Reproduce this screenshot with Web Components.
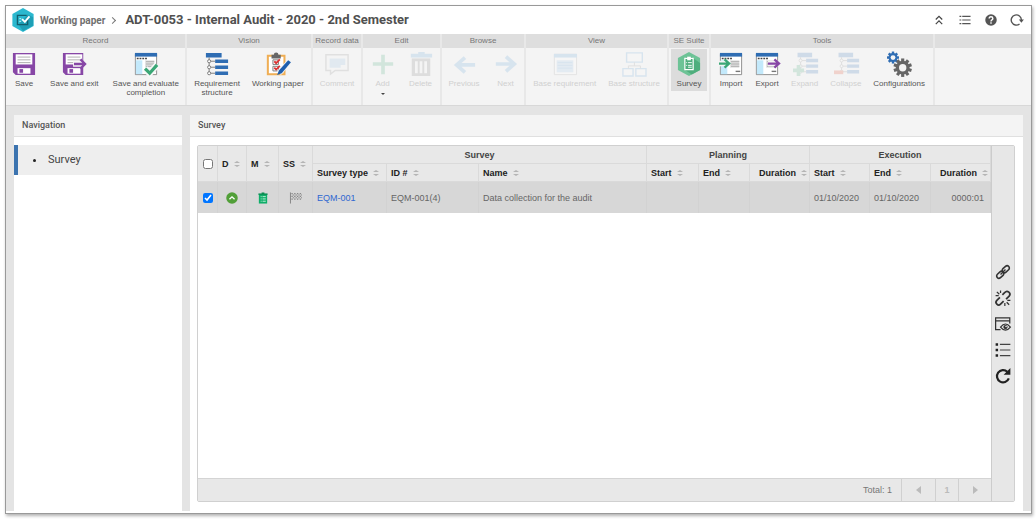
<!DOCTYPE html>
<html lang="en">
<head>
<meta charset="utf-8">
<title>ADT-0053 - Internal Audit - 2020 - 2nd Semester</title>
<style>
html,body{margin:0}
body{display:flex;min-height:100vh;box-sizing:border-box;padding:5px 4px 5px 5px;background:#fff;font:8px/9px "Liberation Sans",Arial,sans-serif;color:#555}
audit-app{flex:1}
</style>
</head>
<body>
<audit-app></audit-app>
<script>
const tree = `<path fill="#2f6db3" d="M1 1h17v5H1zM11 8h14v4H11zM11 14.500h14v4H11zM11 21h14v4H11z"/><path fill="none" stroke="#777" d="M4.500 6v17M6 10h5M6 16.500h5M6 23h5"/><g fill="#fff" stroke="#777"><circle cx="4.500" cy="10" r="1.700"/><circle cx="4.500" cy="16.500" r="1.700"/><circle cx="4.500" cy="23" r="1.700"/></g>`;
const form = `<path fill="#fff" stroke="#888" d="M1.500 2.500h23v22h-23z"/><path fill="#2f6db3" d="M1 1h24v4H1z"/><path stroke="#444" stroke-width="1.500" stroke-dasharray="2 1" d="M3 7h12"/><path fill="#c3e9fb" d="M2 9h7v15H2z"/><path fill="#e0e0e0" d="M12 9h10v8H12z"/><path stroke="#aaa" d="M13 10.500h9M13 13h9M13 15.500h9"/><path stroke="#777" stroke-width="1.500" d="M18 21h5"/>`;
const gear = (cx, cy, r, w, n, color) => {
  let teeth = '';
  for (let i = 0; i < n; i++) teeth += `<rect x="${cx - w / 2}" y="${cy - r}" width="${w}" height="${r}" transform="rotate(${i * 360 / n} ${cx} ${cy})"/>`;
  return `<g fill="${color}">${teeth}<circle cx="${cx}" cy="${cy}" r="${r * .75}"/></g><circle cx="${cx}" cy="${cy}" r="${r * .4}" fill="#f4f4f4"/>`;
};
const floppy = `<path fill="#8747a6" d="M1 1h24v24H4l-3-3z"/><path fill="#fff" d="M4 2.500h18v11H4z"/><path stroke="#aaa" d="M6 5.500h14M6 8.500h14M6 11.500h14"/><path fill="#fff" d="M6 17.500h14v6H6z"/><path fill="#8747a6" d="M8 18.500h4v4H8z"/>`;
const ICONS = {
  save: floppy,
  exit: floppy + `<path fill="none" stroke="#f4f4f4" stroke-width="6" d="M12 13h14"/><path fill="#f4f4f4" d="M23 1h3v24h-3z"/><path fill="none" stroke="#8747a6" stroke-width="2.500" d="M13 13h12M20 8l5 5-5 5"/>`,
  evaluate: form + `<path fill="none" stroke="#f8f8f8" stroke-width="7" d="M12 18l5 5 8-9"/><path fill="none" stroke="#3ba776" stroke-width="3.500" d="M12 18l5 5 8-9"/>`,
  tree,
  paper: `<path fill="#fff" stroke="#efae55" stroke-width="2.200" d="M2 4h18v20H2z"/><path fill="#666" d="M6 3h2.500a2.500 2.500 0 0 1 5 0H16v4H6z"/><path fill="#fff" stroke="#777" d="M7.500 8.500h6v5h-6zM7.500 15.500h6v5h-6z"/><path fill="none" stroke="#d33" stroke-width="2" d="M9 10l2 2 4-4M9 17l2 2 4-4"/><path stroke="#f4f4f4" stroke-width="6" d="M14 23L25 11"/><path fill="#1f5fae" d="M24 9l3 2-10 12-5 2 2-5z"/>`,
  comment: `<path fill="#f8f8f8" stroke="#888" stroke-width="1.500" d="M1 3h24v17H11l-5 4v-4H1z"/><path fill="#8dbce3" d="M5 7h17v7h-5v3H5z"/>`,
  plus: `<path fill="#3ba776" d="M11 3h4v8h9v4h-9v9h-4v-9H2v-4h9z"/>`,
  trash: `<path fill="#5b9fd8" d="M10 0h7v2h8v4H2V2h8z"/><path fill="#777" d="M3 7h20v19H3z"/><path stroke="#f4f4f4" stroke-width="3" d="M8 10v13M13 10v13M18 10v13"/>`,
  prev: `<path fill="none" stroke="#5b9fd8" stroke-width="4" d="M25 14H4M14 6l-9 8 9 8"/>`,
  next: `<path fill="none" stroke="#5b9fd8" stroke-width="4" d="M2 13h21M13 5l9 8-9 8"/>`,
  requirement: `<path fill="#fff" stroke="#999" d="M1.500 2.500h24v22h-24z"/><path fill="#5b9fd8" d="M1 2h25v4H1z"/><path fill="#9cc4ea" d="M4 9h18v13H4z"/><path stroke="#5b9fd8" d="M5 11.500h16M5 14.500h16M5 17.500h16"/>`,
  structure: `<g fill="#fafafa" stroke="#5b9fd8" stroke-width="1.500"><path d="M5 1h17v10H5zM1 18h11v8H1zM15 18h11v8H15z"/></g><path fill="none" stroke="#888" d="M13.500 11v4M7 18v-3h13v3"/>`,
  survey: `<path fill="#6dc396" d="M13 0l12 6.500v13L13 26 1 19.500v-13z"/><path fill="#4fae7d" d="M9 7l2-2h4l10 7v7.500l-9 5L8 19z"/><path fill="none" stroke="#fff" stroke-width="1.300" d="M8.500 7h9v12h-9z"/><path fill="#fff" d="M11 5h4v4h-4z"/><path stroke="#fff" d="M10 11.500h1M12 11.500h4M10 14.500h1M12 14.500h4M12 16.500h4"/>`,
  import: form + `<path fill="none" stroke="#f4f4f4" stroke-width="6" d="M0 12.500h11"/><path fill="none" stroke="#3ba776" stroke-width="2.500" d="M0 12.500h10M6 8l5 4.500L6 17"/>`,
  export: form + `<path fill="none" stroke="#f4f4f4" stroke-width="6" d="M14 12.500h12"/><path fill="none" stroke="#8747a6" stroke-width="2.500" d="M14 12.500h12M21 8l5 4.500-5 4.500"/>`,
  expand: `<svg x="4" y="0" width="24" height="24" viewBox="0 0 28 28">${tree}</svg><path fill="#3ba776" d="M4 14h4v4h4v4H8v4H4v-4H0v-4h4z"/>`,
  collapse: `<svg x="4" y="0" width="24" height="24" viewBox="0 0 28 28">${tree}</svg><path fill="#e2401c" d="M0 20h10v4H0z"/>`,
  gears: gear(6.5, 6, 6.5, 2.6, 8, '#2f6db3') + gear(17, 17, 10, 3.4, 10, '#666'),
  logo: `<path fill="#2bb8cf" d="M13 0l11.500 6.500v13L13 26 1.500 19.500v-13z"/><path fill="#1e9fb6" d="M8 18l10-11 6 3v9l-11 6z"/><path fill="none" stroke="#12606f" stroke-width="1.500" d="M17 8H7v10h11v-5"/><path fill="none" stroke="#fff" stroke-width="2" d="M12 12l3 3 5-6"/><path stroke="#c9f1f6" d="M9 11.500h2M9 14.500h2"/>`,
  up: `<path fill="none" stroke="#444" stroke-width="2.600" d="M6 12l7-7 7 7M6 22l7-7 7 7"/>`,
  list: `<path stroke="#555" stroke-width="2.500" d="M1 5h4M7 5h18M1 13h4M7 13h18M1 21h4M7 21h18"/>`,
  help: `<circle cx="13" cy="13" r="12.500" fill="#555"/><path fill="none" stroke="#fff" stroke-width="3" d="M9 10q0-4 4-4t4 3.500q0 2-2 3.200t-2 3.300"/><path fill="#fff" d="M11.500 18h3v3h-3z"/>`,
  reload: `<path fill="none" stroke="#555" stroke-width="3" d="M18.500 21.500A11 11 0 1 1 22.500 13"/><path fill="#555" d="M17 12h11l-5.500 7z"/>`,
  link: `<g fill="none" stroke="#333" stroke-width="2.600"><rect x="-6.500" y="-3.700" width="13" height="7.400" rx="3.700" transform="translate(17.500 8.500) rotate(-42)"/><rect x="-6.500" y="-3.700" width="13" height="7.400" rx="3.700" transform="translate(8.500 17.500) rotate(-42)"/></g><path stroke="#333" stroke-width="2.200" d="M9 17l8-8"/>`,
  unlink: `<g fill="none" stroke="#333" stroke-width="2.800"><path d="M12 8l4-4a4 4 0 0 1 7 6l-5 5M14 18l-5 5a4 4 0 0 1-6-6l5-5"/></g><path stroke="#333" stroke-width="2" d="M3 3l4 4M9 1v4M1 9h5M19 20l4 4M16 21v5M20 17h5"/>`,
  preview: `<path fill="none" stroke="#333" stroke-width="2" d="M9 22H1V3h23v9M1 8h23"/><path fill="#e7e7e7" stroke="#333" stroke-width="2" d="M9 18q8-10 16 0-8 10-16 0z"/><circle cx="17" cy="18" r="3.500" fill="#333"/><circle cx="18" cy="17" r="1.200" fill="#fff"/>`,
  sidelist: `<path stroke="#222" stroke-width="4" d="M1 4h4M1 13h4M1 22h4"/><path stroke="#444" stroke-width="2" d="M8 4h17M8 13h17M8 22h17"/>`,
  redo: `<path fill="none" stroke="#222" stroke-width="3.600" d="M22.500 17A10 10 0 1 1 20 6"/><path fill="#222" d="M25 0v11H14z"/>`,
  ok: `<circle cx="13" cy="13" r="12.500" fill="#519f38"/><path fill="none" stroke="#fff" stroke-width="3" d="M7.500 15.500L13 10.500l5.500 5"/>`,
  clip: `<path fill="#0fae69" d="M4 4h18v21H4z"/><path fill="#0a8a50" d="M3 3h7V1h6v2h7v3H3z"/><path stroke="#c9f3de" stroke-width="2" d="M8 10h2M12 10h7M8 15h2M12 15h7M8 20h2M12 20h7"/>`,
  flag: `<path stroke="#777" stroke-width="1.800" d="M1 1v24"/><path fill="none" stroke="#888" stroke-width="2.600" stroke-dasharray="3 3" d="M3 3.500h22M6 6.500h20M3 9.500h22M6 12.500h20M3 15.500h22"/>`
};

function define(name, markup, setup) {
  const template = document.createElement('template');
  template.innerHTML = markup;
  customElements.define(name, class extends HTMLElement {
    constructor() {
      super();
      this.attachShadow({mode: 'open'}).append(template.content.cloneNode(true));
    }
    connectedCallback() { if (setup) setup(this, this.shadowRoot); }
  });
}

define('ui-icon', `<style>:host{display:inline-flex;width:var(--icon,24px);height:var(--icon,24px)}svg{width:100%;height:100%;overflow:visible}</style><svg viewBox="0 0 26 26" aria-hidden="true"></svg>`,
  (el, root) => { root.querySelector('svg').innerHTML = ICONS[el.getAttribute('name')]; });

define('tool-button', `<style>
:host{display:block;flex:none}
button{display:flex;flex-direction:column;align-items:center;gap:3px;font:inherit;color:#555;background:none;border:0;padding:3px 3px 2px;margin:0;min-height:42px;white-space:nowrap}
button:disabled{color:#d0d0d0}
button:disabled ui-icon{opacity:.18}
:host([active]) button{background:#dcdcdc;padding-inline:6px}
.text{text-align:center}
i{display:none;border:2px solid transparent;border-top-color:#444;border-bottom:0;margin:2px auto 0}
:host([menu]) i{display:block;width:0}
</style><button type="button"><span class="text"><slot></slot></span><i></i></button>`,
  (el, root) => {
    const button = root.querySelector('button');
    const icon = document.createElement('ui-icon');
    icon.setAttribute('name', el.getAttribute('icon'));
    button.prepend(icon);
    button.disabled = el.hasAttribute('disabled');
  });

define('tool-group', `<style>
:host{display:flex;flex-direction:column;flex:none;background:#f4f4f4}
h3{margin:0;height:14px;font:inherit;line-height:14px;text-align:center;background:#dedede;color:#777;white-space:nowrap}
div{display:flex;align-items:flex-start;justify-content:center;gap:var(--gap,8px);padding-top:1px;flex:1}
</style><h3></h3><div><slot></slot></div>`,
  (el, root) => { root.querySelector('h3').textContent = el.getAttribute('label') || ''; });

define('title-bar', `<style>
:host{display:flex;align-items:center;height:28px;padding:0 8px 0 5px;background:#fff;font-family:Roboto,sans-serif}
a{font-size:10px;font-weight:700;color:#707070;text-decoration:none;margin-left:5px;white-space:nowrap}
.sep{width:4px;height:4px;border:solid #777;border-width:1px 1px 0 0;transform:rotate(45deg);margin:0 10px 0 5px}
h1{font:700 13px/16px Roboto,sans-serif;color:#505050;margin:0;white-space:nowrap;flex:1}
nav{display:flex;align-items:center;gap:14px;--icon:12px}
button{border:0;background:none;padding:0;margin:0;display:flex}
.logo{--icon:24px}
</style><ui-icon class="logo" name="logo"></ui-icon><a href="#">Working paper</a><span class="sep"></span><h1>ADT-0053 - Internal Audit - 2020 - 2nd Semester</h1>
<nav><button aria-label="Collapse header"><ui-icon name="up"></ui-icon></button><button aria-label="Options"><ui-icon name="list"></ui-icon></button><button aria-label="Help"><ui-icon name="help"></ui-icon></button><button aria-label="Reload"><ui-icon name="reload"></ui-icon></button></nav>`);

define('tool-ribbon', `<style>
:host{display:flex;gap:2px;height:71px;background:#e8e8e8;border-bottom:1px solid #d8d8d8}
</style>
<tool-group label="Record" style="width:179px"><tool-button icon="save">Save</tool-button><tool-button icon="exit">Save and exit</tool-button><tool-button icon="evaluate">Save and evaluate<br>completion</tool-button></tool-group>
<tool-group label="Vision" style="width:124px;--gap:6px"><tool-button icon="tree">Requirement<br>structure</tool-button><tool-button icon="paper">Working paper</tool-button></tool-group>
<tool-group label="Record data" style="width:48px"><tool-button icon="comment" disabled>Comment</tool-button></tool-group>
<tool-group label="Edit" style="width:77px"><tool-button icon="plus" disabled menu>Add</tool-button><tool-button icon="trash" disabled>Delete</tool-button></tool-group>
<tool-group label="Browse" style="width:82px"><tool-button icon="prev" disabled>Previous</tool-button><tool-button icon="next" disabled>Next</tool-button></tool-group>
<tool-group label="View" style="width:141px;--gap:6px"><tool-button icon="requirement" disabled>Base requirement</tool-button><tool-button icon="structure" disabled>Base structure</tool-button></tool-group>
<tool-group label="SE Suite" style="width:40px"><tool-button icon="survey" active>Survey</tool-button></tool-group>
<tool-group label="Tools" style="width:222px;--gap:6px"><tool-button icon="import">Import</tool-button><tool-button icon="export">Export</tool-button><tool-button icon="expand" disabled>Expand</tool-button><tool-button icon="collapse" disabled>Collapse</tool-button><tool-button icon="gears">Configurations</tool-button></tool-group>
<tool-group style="flex:1"></tool-group>`);

define('panel-box', `<style>
:host{display:flex;flex-direction:column;background:#fff}
h2{margin:0;height:22px;font:500 9px/20px Roboto,sans-serif;color:#555;padding-left:8px;background:#f4f4f4;border-bottom:1px solid #e0e0e0;box-sizing:border-box}
div{display:flex;flex-direction:column;flex:1}
</style><h2></h2><div><slot></slot></div>`,
  (el, root) => { root.querySelector('h2').textContent = el.getAttribute('label'); });

define('side-nav', `<style>
:host{display:block;padding-top:8px}
a{display:flex;align-items:center;gap:12px;height:30px;padding-left:15px;border-left:4px solid #3b73af;background:#eee;color:#444;text-decoration:none;font:11px/14px Roboto,sans-serif}
a::before{content:"";width:3px;height:3px;border-radius:50%;background:#222}
</style><nav><a href="#">Survey</a></nav>`);

define('survey-grid', `<style>
:host{display:flex;flex:1;margin:8px 8px 9px 7px;border:1px solid #d0d0d0;border-radius:2px;font-size:9px;line-height:12px}
.main{display:flex;flex-direction:column;flex:1;min-width:0}
table{width:100%;table-layout:fixed;border-collapse:separate;border-spacing:0}
th,td{box-sizing:border-box;padding:0 0 0 4px;text-align:left;white-space:nowrap;border-right:1px solid #dadada;color:#222}
th{background:#e8e8e8;border-bottom:1px solid #dadada;height:18px;font-weight:700}
th[colspan]{text-align:center;color:#444;padding:0}
th.r{text-align:right}
td{background:#d7d7d7;height:31px;color:#666;border-right-color:#d2d2d2}
td.r{text-align:right;padding-right:6px}
td.c,th.c{text-align:center;padding:0}
td a{color:#2f67d1;text-decoration:none}
td ui-icon{--icon:12px;vertical-align:middle}
input{width:10px;height:10px;margin:0;vertical-align:middle}
.s{display:inline-flex;flex-direction:column;gap:2px;margin:0 2px 0 5px;vertical-align:middle}
.s::before,.s::after{content:"";border:3px solid transparent}
.s::before{border-top:0;border-bottom:2px solid #b4b4b4}
.s::after{border-bottom:0;border-top:2px solid #b4b4b4}
.space{flex:1}
footer{display:flex;justify-content:flex-end;height:22px;background:#e8e8e8;border-top:1px solid #d4d4d4;color:#777}
footer span{padding-right:9px;line-height:22px}
footer button{border:0;border-left:1px solid #d0d0d0;background:none;color:#bbb;font:700 9px/20px "Liberation Sans",sans-serif;padding:0;width:34px;display:flex;align-items:center;justify-content:center}
footer button.n{width:23px}
footer button.last{width:33px}
footer svg{width:6px;height:8px;fill:#bbb}
aside{width:23px;background:#e7e7e7;border-left:1px solid #ccc;display:flex;flex-direction:column;align-items:center;justify-content:center;gap:10px;box-sizing:border-box;flex:none;--icon:16px}
aside button{border:0;padding:0;background:none;display:flex}
</style>
<div class="main"><table>
<colgroup><col style="width:20px"><col style="width:29px"><col style="width:32px"><col style="width:34px"><col style="width:74px"><col style="width:92px"><col><col style="width:52px"><col style="width:51px"><col style="width:60px"><col style="width:60px"><col style="width:61px"><col style="width:60px"></colgroup>
<thead><tr><th rowspan="2" class="c"><input type="checkbox" aria-label="Select all"></th><th rowspan="2">D<span class="s"></span></th><th rowspan="2">M<span class="s"></span></th><th rowspan="2">SS<span class="s"></span></th><th colspan="3">Survey</th><th colspan="3">Planning</th><th colspan="3">Execution</th></tr>
<tr><th>Survey type<span class="s"></span></th><th>ID #<span class="s"></span></th><th>Name<span class="s"></span></th><th>Start<span class="s"></span></th><th>End<span class="s"></span></th><th class="r">Duration<span class="s"></span></th><th>Start<span class="s"></span></th><th>End<span class="s"></span></th><th class="r">Duration<span class="s"></span></th></tr></thead>
<tbody><tr><td class="c"><input type="checkbox" checked aria-label="Select EQM-001"></td><td class="c"><ui-icon name="ok"></ui-icon></td><td class="c"><ui-icon name="clip"></ui-icon></td><td class="c"><ui-icon name="flag"></ui-icon></td><td><a href="#">EQM-001</a></td><td>EQM-001(4)</td><td>Data collection for the audit</td><td></td><td></td><td></td><td>01/10/2020</td><td>01/10/2020</td><td class="r">0000:01</td></tr></tbody></table>
<div class="space"></div>
<footer><span>Total: 1</span><button aria-label="Previous page"><svg viewBox="0 0 6 8"><path d="M5 0v8L0 4z"/></svg></button><button class="n">1</button><button class="last" aria-label="Next page"><svg viewBox="0 0 6 8"><path d="M1 0v8l5-4z"/></svg></button></footer></div>
<aside><button aria-label="Link"><ui-icon name="link"></ui-icon></button><button aria-label="Unlink"><ui-icon name="unlink"></ui-icon></button><button aria-label="Preview"><ui-icon name="preview"></ui-icon></button><button aria-label="List"><ui-icon name="sidelist"></ui-icon></button><button aria-label="Refresh"><ui-icon name="redo"></ui-icon></button></aside>`);

define('audit-app', `<style>
:host{display:flex;flex-direction:column;border:1px solid #999;box-shadow:1px 2px 3px rgba(0,0,0,.3);background:#fff;box-sizing:border-box}
main{display:flex;gap:8px;flex:1;background:#e4e4e4;padding:9px 8px 0;margin-bottom:2px}
.nav{flex:none;width:168px}
.content{flex:1;min-width:0}
</style><title-bar></title-bar><tool-ribbon></tool-ribbon><main><panel-box class="nav" label="Navigation"><side-nav></side-nav></panel-box><panel-box class="content" label="Survey"><survey-grid></survey-grid></panel-box></main>`);
</script>
</body>
</html>
